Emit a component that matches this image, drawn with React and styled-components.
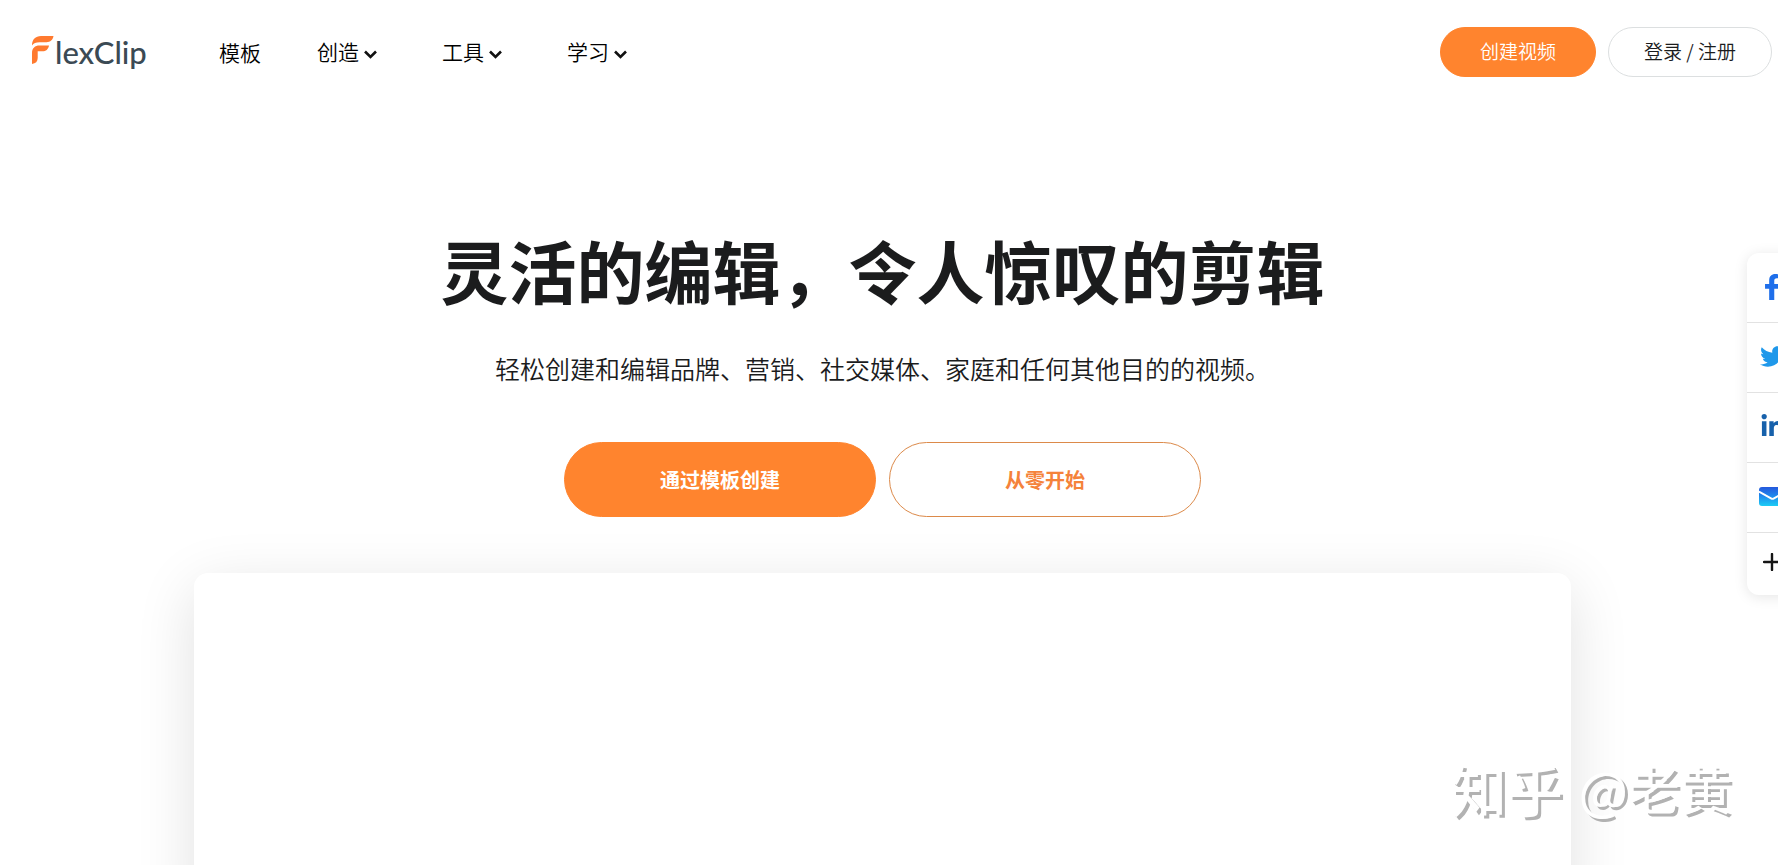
import React from "react";
import styled, { createGlobalStyle, css } from "styled-components";
import { FaFacebookF, FaTwitter, FaLinkedinIn } from "react-icons/fa";

const orange = "#ff842e";
const ink = "#1b1c1d";

const GlobalStyle = createGlobalStyle`
  *, *::before, *::after { box-sizing: border-box; }
  body {
    margin: 0;
    background: #fff;
    color: ${ink};
    font-family: "Noto Sans CJK SC", sans-serif;
  }
  a { color: inherit; text-decoration: none; }
  button { font-family: inherit; cursor: pointer; }
`;

const Page = styled.div`
  position: relative;
  display: flex;
  flex-direction: column;
  min-height: 100vh;
  overflow: hidden;
`;

const Header = styled.header`
  display: flex;
  align-items: center;
  padding: 27px 6px 0 32px;
`;

const Logo = styled.a`
  display: flex;
  align-items: flex-start;
  gap: 1px;
  width: 187px;
  height: 40px;
  color: #3b4a54;
  font: 500 31px/40px Lato, sans-serif;
`;

const LogoMark = styled.svg`
  width: 22px;
  height: 28px;
  margin-top: 4px;
`;

const Nav = styled.nav`
  display: flex;
  align-items: center;
  gap: 56px;
`;

const navItem = css`
  color: #000;
  font-size: 21px;
  font-weight: 350;
  line-height: 30px;
`;

const NavLink = styled.a`
  ${navItem}
`;

const NavMenu = styled.button`
  ${navItem}
  display: flex;
  align-items: center;
  gap: 5px;
  padding: 0 9px 3px 0;
  border: 0;
  background: none;
`;

const Chevron = styled.svg`
  width: 13px;
  height: 9px;
  margin-top: 8px;
`;

const Account = styled.div`
  display: flex;
  gap: 12px;
  margin-left: auto;
`;

const PillLink = styled.a`
  display: flex;
  align-items: center;
  justify-content: center;
  height: 50px;
  padding: 0 ${(p) => (p.$filled ? 39 : 35)}px 3px;
  border: 1px solid ${(p) => (p.$filled ? orange : "#dcdfe0")};
  border-radius: 25px;
  background: ${(p) => (p.$filled ? orange : "#fff")};
  color: ${(p) => (p.$filled ? "#fff" : ink)};
  font-size: 19px;
  font-weight: 350;
  white-space: nowrap;
`;

const Hero = styled.main`
  flex: 1;
  display: flex;
  flex-direction: column;
  align-items: center;
  padding: 153px 13px 0 0;
`;

const Title = styled.h1`
  margin: 0;
  font-size: 68px;
  font-weight: 700;
  line-height: 80px;
`;

const Subtitle = styled.p`
  margin: 38px 0 0;
  font-size: 25px;
  font-weight: 350;
  line-height: 40px;
`;

const Actions = styled.div`
  display: flex;
  gap: 13px;
  margin-top: 54px;
`;

const ActionButton = styled.button`
  width: 312px;
  height: 75px;
  border: 1px solid ${(p) => (p.$filled ? orange : "#dc8a4a")};
  border-radius: 38px;
  background: ${(p) => (p.$filled ? orange : "#fff")};
  color: ${(p) => (p.$filled ? "#fff" : "#f5823a")};
  font-size: 20px;
  font-weight: 700;
`;

const Preview = styled.section`
  flex: 1;
  width: 78%;
  min-height: 340px;
  margin: 56px 0 -48px;
  border-radius: 14px;
  background: #fff;
  box-shadow: 0 14px 60px rgba(0, 0, 0, 0.12);
`;

const ShareBar = styled.aside`
  position: fixed;
  top: 253px;
  right: -19px;
  width: 50px;
  border-radius: 12px;
  background: #fff;
  box-shadow: 0 2px 14px rgba(0, 0, 0, 0.1);
`;

const ShareItem = styled.a`
  display: flex;
  align-items: center;
  justify-content: center;
  height: 70px;
  padding-bottom: 2px;
  border-bottom: 1px solid #e2e2e2;
  color: ${(p) => p.$color};

  &:last-child {
    height: 62px;
    padding-bottom: 4px;
    border-bottom: 0;
  }
`;

const Watermark = styled.div`
  position: fixed;
  right: 46px;
  bottom: 42px;
  display: flex;
  align-items: center;
  gap: 16px;
  color: #fff;
  font-size: 52px;
  font-weight: 400;
  line-height: 70px;
  text-shadow: 3px 3px 0 #b2b2b2;
`;

const WatermarkBrand = styled.span`
  font-size: 56px;
  font-weight: 500;
`;

const menus = ["创造", "工具", "学习"];

function MailIcon() {
  return (
    <svg width="27" height="19" viewBox="0 0 27 19" aria-hidden="true">
      <defs>
        <linearGradient id="mail" x1="0" y1="0" x2="0" y2="1">
          <stop offset="0" stopColor="#2558dc" />
          <stop offset="0.45" stopColor="#1e86ec" />
          <stop offset="1" stopColor="#1ccdf5" />
        </linearGradient>
      </defs>
      <rect width="27" height="19" rx="3" fill="url(#mail)" />
      <path d="M0 4.6 12 11.4a3 3 0 0 0 3 0L27 4.6" fill="none" stroke="#fff" strokeWidth="1.8" />
    </svg>
  );
}

function PlusIcon() {
  return (
    <svg width="18" height="18" viewBox="0 0 18 18" aria-hidden="true">
      <path d="M9 1v16M1 9h16" stroke="#151515" strokeWidth="2.4" strokeLinecap="round" />
    </svg>
  );
}

const shares = [
  { name: "Facebook", color: "#1f6fea", icon: <FaFacebookF size={26} /> },
  { name: "Twitter", color: "#1f98ea", icon: <FaTwitter size={25} /> },
  { name: "LinkedIn", color: "#1761ab", icon: <FaLinkedinIn size={25} /> },
  { name: "Email", color: "#1e86ec", icon: <MailIcon /> },
  { name: "More", color: "#151515", icon: <PlusIcon /> },
];

export default function App() {
  return (
    <>
      <GlobalStyle />
      <Page>
        <Header>
          <Logo href="#" aria-label="FlexClip">
            <LogoMark viewBox="0 0 22 28" aria-hidden="true">
              <path d="M0 9.5C0 3.5 3.5 0 9 0h12.5c-.8 4-3 6.200-7 6.200H7.500C4 6.200 1.500 7 0 9.500Z" fill="#ff7a2f" />
              <path d="M0 17C0 12 3 9.500 7.500 9.500H17c-.8 4-3 5.800-6.500 5.800H5.700V22c0 3.500-2 5.500-5.700 6Z" fill="#ff7a2f" />
            </LogoMark>
            lexClip
          </Logo>
          <Nav>
            <NavLink href="#">模板</NavLink>
            {menus.map((label) => (
              <NavMenu key={label} type="button">
                {label}
                <Chevron viewBox="0 0 13 9" aria-hidden="true">
                  <path d="M1 1.500 6.500 7 12 1.500" fill="none" stroke="#111" strokeWidth="2.600" />
                </Chevron>
              </NavMenu>
            ))}
          </Nav>
          <Account>
            <PillLink href="#" $filled>创建视频</PillLink>
            <PillLink href="#">登录 / 注册</PillLink>
          </Account>
        </Header>
        <Hero>
          <Title>灵活的编辑，令人惊叹的剪辑</Title>
          <Subtitle>轻松创建和编辑品牌、营销、社交媒体、家庭和任何其他目的的视频。</Subtitle>
          <Actions>
            <ActionButton type="button" $filled>通过模板创建</ActionButton>
            <ActionButton type="button">从零开始</ActionButton>
          </Actions>
          <Preview />
        </Hero>
        <ShareBar>
          {shares.map((s) => (
            <ShareItem key={s.name} href="#" aria-label={s.name} $color={s.color}>
              {s.icon}
            </ShareItem>
          ))}
        </ShareBar>
        <Watermark>
          <WatermarkBrand>知乎</WatermarkBrand>
          <span>@老黄</span>
        </Watermark>
      </Page>
    </>
  );
}
